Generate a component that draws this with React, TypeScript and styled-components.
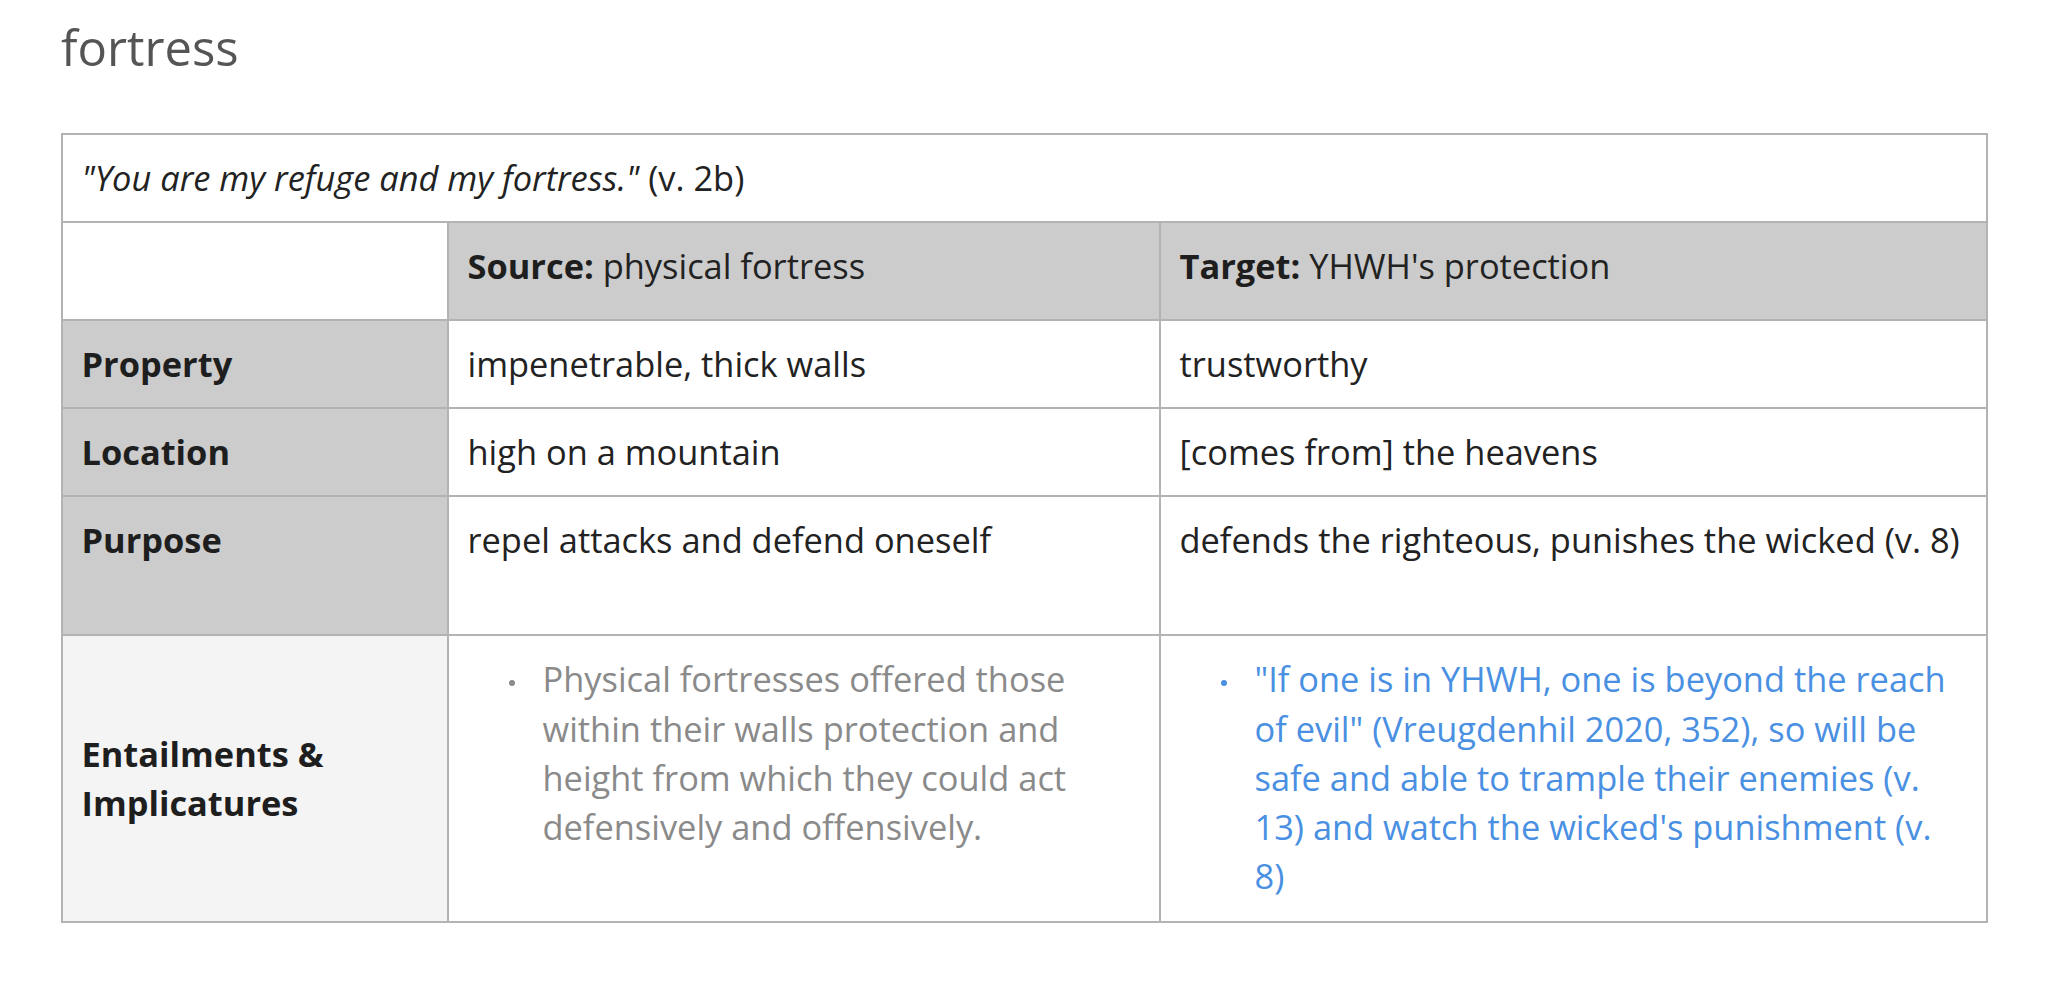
import React from "react";
import styled, { createGlobalStyle } from "styled-components";

const GlobalStyle = createGlobalStyle`
  html, body { margin: 0; padding: 0; background: #ffffff; }
  body {
    font-family: "Open Sans", "Noto Sans", "Liberation Sans", sans-serif;
    color: #222222;
  }
`;

const Page = styled.main`
  padding: 19px 67px 40px 61px;
  font-size: 34.4px;
  line-height: 1.43;
`;

const Title = styled.h2`
  margin: 0 0 56px;
  font-size: 49px;
  line-height: 1.18;
  font-weight: 400;
  color: #555555;
`;

const Table = styled.table`
  width: 1925px;
  table-layout: fixed;
  border-collapse: collapse;
  border: 2px solid #b3b3b3;
`;

const Col = styled.col<{ $w: number }>`
  width: ${(p) => p.$w}px;
`;

const Row = styled.tr<{ $h?: number }>`
  ${(p) => (p.$h ? `height: ${p.$h}px;` : "")}
`;

const Cell = styled.td<{
  $bg?: string;
  $middle?: boolean;
  $nowrap?: boolean;
}>`
  border: 2px solid #b3b3b3;
  padding: 18px 19px 19px 18.5px;
  vertical-align: ${(p) => (p.$middle ? "middle" : "top")};
  background: ${(p) => p.$bg ?? "#ffffff"};
  text-align: left;
  font-weight: 400;
  ${(p) => (p.$nowrap ? "white-space: nowrap;" : "")}
`;

const Label = styled.span`
  font-weight: 700;
  color: #1e1e1e;
`;

const Quote = styled.em`
  font-style: italic;
`;

const List = styled.ul<{ $color: string; $padRight?: number }>`
  margin: 0;
  padding: 0 ${(p) => p.$padRight ?? 0}px 0 0;
  list-style: none;
  color: ${(p) => p.$color};
`;

const Item = styled.li<{ $color: string }>`
  display: grid;
  grid-template-columns: 34px 1fr;
  margin-left: 41px;

  &::before {
    content: "";
    width: 6px;
    height: 6px;
    border-radius: 50%;
    background: ${(p) => p.$color};
    margin-top: 26px;
  }
`;

const GRAY = "#8a8a8a";
const BLUE = "#4a90e2";
const HEAD = "#cccccc";
const SOFT = "#f4f4f4";

export default function App() {
  return (
    <>
      <GlobalStyle />
      <Page>
        <Title>fortress</Title>
        <Table>
          <colgroup>
            <Col $w={386} />
            <Col $w={712} />
            <Col $w={827} />
          </colgroup>
          <tbody>
            <Row>
              <Cell colSpan={3}>
                <Quote>"You are my refuge and my fortress."</Quote> (v. 2b)
              </Cell>
            </Row>
            <Row $h={98}>
              <Cell />
              <Cell as="th" $bg={HEAD}>
                <Label>Source:</Label> physical fortress
              </Cell>
              <Cell as="th" $bg={HEAD}>
                <Label>Target:</Label> YHWH's protection
              </Cell>
            </Row>
            <Row>
              <Cell as="th" $bg={HEAD}>
                <Label>Property</Label>
              </Cell>
              <Cell>impenetrable, thick walls</Cell>
              <Cell>trustworthy</Cell>
            </Row>
            <Row>
              <Cell as="th" $bg={HEAD}>
                <Label>Location</Label>
              </Cell>
              <Cell>high on a mountain</Cell>
              <Cell>[comes from] the heavens</Cell>
            </Row>
            <Row $h={139}>
              <Cell as="th" $bg={HEAD}>
                <Label>Purpose</Label>
              </Cell>
              <Cell>repel attacks and defend oneself</Cell>
              <Cell $nowrap>defends the righteous, punishes the wicked (v. 8)</Cell>
            </Row>
            <Row $h={287}>
              <Cell as="th" $bg={SOFT} $middle>
                <Label>Entailments &amp; Implicatures</Label>
              </Cell>
              <Cell>
                <List $color={GRAY} $padRight={40}>
                  <Item $color={GRAY}>
                    <span>
                      Physical fortresses offered those within their walls
                      protection and height from which they could act
                      defensively and offensively.
                    </span>
                  </Item>
                </List>
              </Cell>
              <Cell>
                <List $color={BLUE} $padRight={13}>
                  <Item $color={BLUE}>
                    <span>
                      "If one is in YHWH, one is beyond the reach of evil"
                      (Vreugdenhil 2020, 352), so will be safe and able to
                      trample their enemies (v. 13) and watch the wicked's
                      punishment (v. 8)
                    </span>
                  </Item>
                </List>
              </Cell>
            </Row>
          </tbody>
        </Table>
      </Page>
    </>
  );
}
